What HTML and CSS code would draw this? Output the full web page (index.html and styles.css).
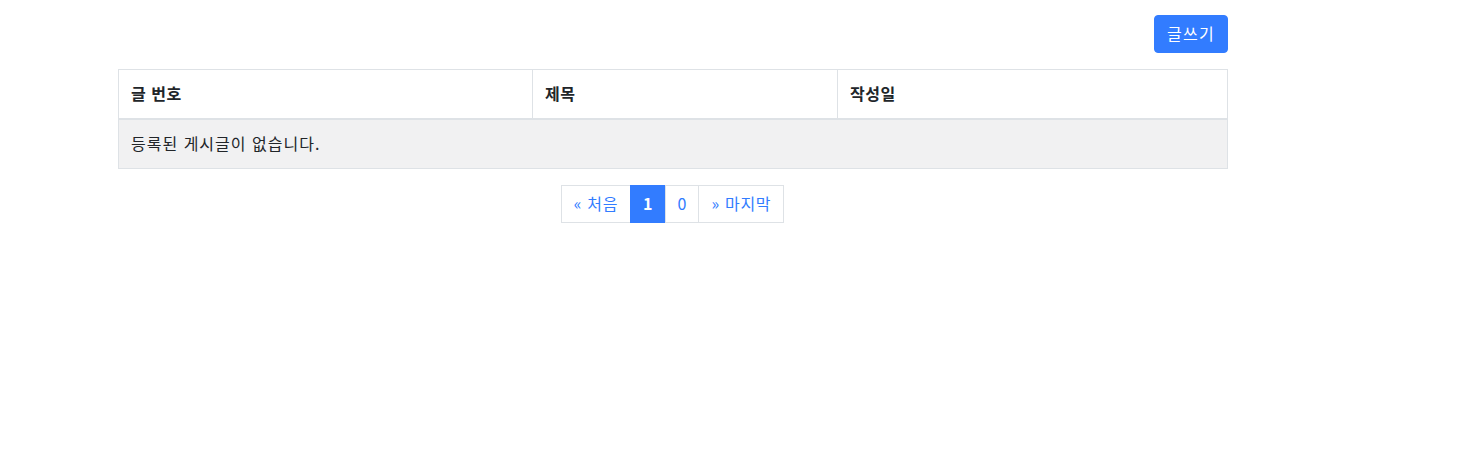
FILE: index.html
```html
<!DOCTYPE html>
<html lang="ko">
<head>
<meta charset="utf-8">
<title>게시판</title>
<link rel="stylesheet" href="styles.css">
</head>
<body>
<div class="container">
  <div class="toolbar">
    <button class="btn-primary" type="button">글쓰기</button>
  </div>
  <table class="board">
    <thead>
      <tr>
        <th class="col-no">글 번호</th>
        <th class="col-title">제목</th>
        <th class="col-date">작성일</th>
      </tr>
    </thead>
    <tbody>
      <tr class="empty-row">
        <td colspan="3">등록된 게시글이 없습니다.</td>
      </tr>
    </tbody>
  </table>
  <nav class="pager">
    <a class="page-link wide" href="#">« 처음</a>
    <a class="page-link active" href="#">1</a>
    <a class="page-link" href="#">0</a>
    <a class="page-link wide" href="#">» 마지막</a>
  </nav>
</div>
</body>
</html>
```

FILE: styles.css
```css
html, body {
  margin: 0;
  padding: 0;
  background: #ffffff;
}
body {
  font-family: "Noto Sans CJK KR", "Noto Sans", sans-serif;
  font-size: 16px;
  line-height: 24px;
  color: #212529;
}
.container {
  width: 1110px;
  margin-left: 118px;
  padding-top: 15px;
}
.toolbar {
  display: flex;
  justify-content: flex-end;
  margin-bottom: 16px;
}
.btn-primary {
  font-family: inherit;
  font-size: 16px;
  line-height: 24px;
  height: 38px;
  padding: 5px 12px 7px;
  letter-spacing: 1.3px;
  color: #ffffff;
  background: #327cff;
  border: 1px solid #327cff;
  border-radius: 4px;
  cursor: pointer;
}
.board {
  width: 100%;
  border-collapse: collapse;
  table-layout: fixed;
}
.board th,
.board td {
  border: 1px solid #dee2e6;
  padding: 11px 12px 13px;
  text-align: left;
  vertical-align: top;
  line-height: 24px;
}
.board th {
  font-weight: 700;
  letter-spacing: 0.5px;
  border-bottom: 2px solid #dee2e6;
}
.col-no { width: 389px; }
.col-title { width: 280px; }
.col-date { width: auto; }
.empty-row td {
  background: #f1f1f2;
  letter-spacing: 1px;
}
.pager {
  display: flex;
  justify-content: center;
  margin-top: 16px;
}
.page-link {
  display: block;
  padding: 6px 12px 8px;
  line-height: 22px;
  font-size: 16px;
  color: #327cff;
  text-decoration: none;
  border: 1px solid #dee2e6;
  margin-left: -1px;
  background: #ffffff;
}
.page-link.wide {
  letter-spacing: 0.7px;
}
.page-link.active {
  background: #327cff;
  border-color: #327cff;
  color: #ffffff;
  font-weight: 700;
}
```
